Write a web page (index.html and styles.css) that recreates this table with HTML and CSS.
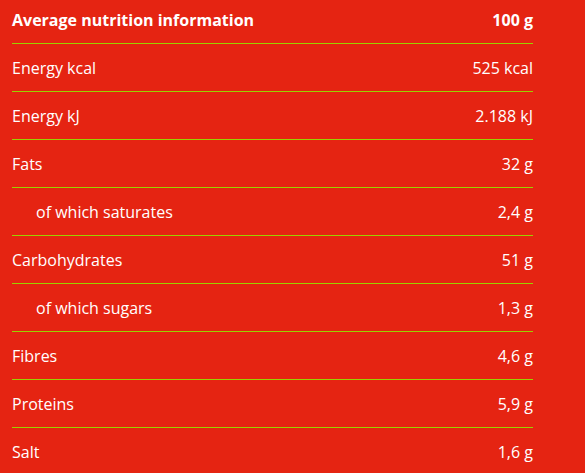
FILE: index.html
```html
<!DOCTYPE html>
<html>
<head>
<meta charset="utf-8">
<link rel="stylesheet" href="styles.css">
</head>
<body>
<div class="nutrition">
  <div class="row head"><span>Average nutrition information</span><span>100 g</span></div>
  <div class="row"><span>Energy kcal</span><span>525 kcal</span></div>
  <div class="row"><span>Energy kJ</span><span>2.188 kJ</span></div>
  <div class="row"><span>Fats</span><span>32 g</span></div>
  <div class="row sub"><span>of which saturates</span><span>2,4 g</span></div>
  <div class="row"><span>Carbohydrates</span><span>51 g</span></div>
  <div class="row sub"><span>of which sugars</span><span>1,3 g</span></div>
  <div class="row"><span>Fibres</span><span>4,6 g</span></div>
  <div class="row"><span>Proteins</span><span>5,9 g</span></div>
  <div class="row"><span>Salt</span><span>1,6 g</span></div>
</div>
</body>
</html>
```
FILE: styles.css
```css
html, body {
  margin: 0;
  padding: 0;
  background: #e52412;
}
body {
  font-family: "Open Sans", "DejaVu Sans", sans-serif;
  color: #ffffff;
  font-size: 16px;
}
.nutrition {
  width: 521px;
  margin-left: 12px;
}
.row {
  display: flex;
  justify-content: space-between;
  align-items: center;
  height: 47px;
  border-bottom: 1px solid #9bd100;
}
.row.head {
  height: 44px;
  font-weight: 700;
  padding-bottom: 4px;
  box-sizing: border-box;
}
.row.sub span:first-child {
  padding-left: 24px;
}
```
